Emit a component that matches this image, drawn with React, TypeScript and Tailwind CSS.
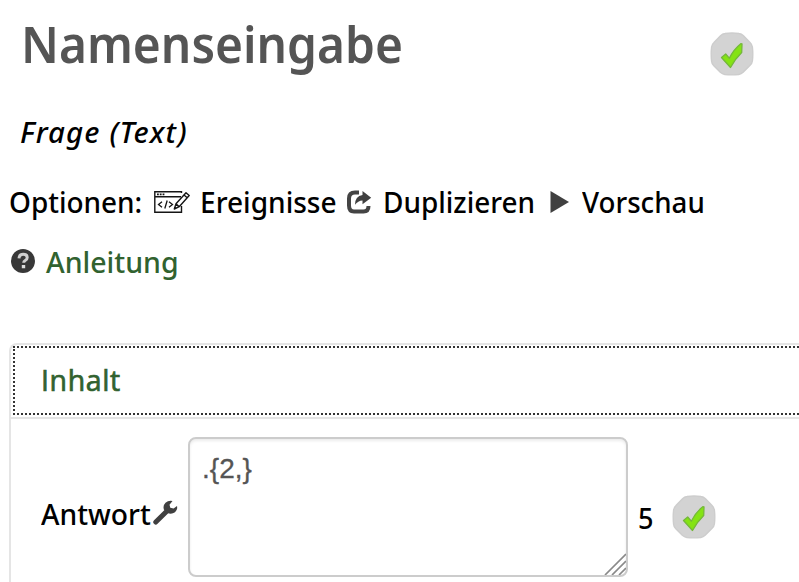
import React from "react";

function Check() {
  return (
    <svg viewBox="0 0 44 44" className="size-11 shrink-0">
      <path d="M15 1.500Q22 .500 29 1.500q2.500.300 4.500 2.300l6.500 6.700q2 2 2.400 4.500.800 7 0 14-.300 2.500-2.300 4.300l-7 7q-1.800 1.800-4.300 2.200-7 .800-14 0-2.500-.400-4.500-2.200l-6.500-6.500Q1.900 32 1.600 29.300.800 22 1.600 15q.300-2.500 2.400-4.500l6.500-6.700Q12.500 1.800 15 1.500z" fill="#d3d3d3" stroke="#cdcdcd" strokeWidth="1.400" />
      <path d="M11.500 25.500l4.200-3.500 3.600 4.200q4.500-9 11.500-14.500l1.200.300-.300 8.500Q25 27 20.500 35.500z" fill="#84e314" stroke="#74b83a" strokeWidth="1.300" strokeLinejoin="round" />
    </svg>
  );
}

function EditorIcon() {
  return (
    <svg viewBox="0 0 36 24" className="h-6 w-9 shrink-0" fill="none" stroke="#151515" strokeWidth="1.400">
      <path d="M27.500 3V1.700H.800v20.600h26.700V16M.800 6.800H27" />
      <path d="M3 4.300h7.500" strokeWidth="1.700" strokeDasharray="1.800 1" />
      <path d="M8 11.700L4.500 14.500 8 17.300M13.200 10.500l-2.400 8M15 11.700l3.500 2.800-3.500 2.800" strokeWidth="1.300" />
      <path d="M20.300 19l1.700-5.300L32 2.800l3.200 2.700-10 11.200zM30 5l3.200 2.700M22 13.700l3.200 3" fill="#fff" strokeLinejoin="round" />
    </svg>
  );
}

function ShareIcon() {
  return (
    <svg viewBox="0 0 26 26" className="size-[26px] shrink-0">
      <path d="M13 3.500H9Q3 3.500 3 9.500v7Q3 22.500 8 22.500h9.500q5 0 5-5.500" fill="none" stroke="#444" strokeWidth="4" />
      <path d="M16.500 2l8.700 6.700-8.700 6.500v-3.700q-4.500.200-7.500 4.300Q9 7 16.500 6z" fill="#404040" />
    </svg>
  );
}

function HelpIcon() {
  return (
    <svg viewBox="0 0 26 26" className="size-[26px] shrink-0">
      <circle cx="13" cy="13" r="12" fill="#383838" />
      <path d="M9 10.300q.300-4 4.200-4 4 0 4 3.200 0 1.900-2 3-1.500.800-1.500 2.300" fill="none" stroke="#d0d0d0" strokeWidth="3" />
      <path d="M11.800 17h3.400v3.200h-3.400z" fill="#ddd" />
    </svg>
  );
}

function Wrench() {
  return (
    <svg viewBox="0 0 26 26" className="size-[26px] shrink-0">
      <path d="M3.800 22L15 11" stroke="#404040" strokeWidth="5" strokeLinecap="round" />
      <path d="M20.500 1l-3 3.800.800 3 3.300.700 3.400-2.500q.800 4-2 6.300-3.300 2.300-7.500.800l-3.500-3.300q-1.500-4 1.500-7 3-2.700 7-1.800z" fill="#404040" />
    </svg>
  );
}

export default function App() {
  return (
    <main className="flex h-[582px] w-[799px] flex-col overflow-hidden bg-white font-['Noto_Sans',sans-serif] text-[28.5px] whitespace-nowrap text-black">
      <header className="flex h-[102px] shrink-0 items-start pl-[21px]">
        <h1 className="w-[689px] text-[50px] leading-[88px] font-semibold text-[#555]">
          <span className="inline-block origin-left scale-x-[.957]">Namenseingabe</span>
        </h1>
        <div className="pt-8"><Check /></div>
      </header>
      <p className="h-[70px] shrink-0 pl-[20px] leading-[60px] font-medium italic">
        <span className="inline-block origin-left scale-x-[1.03] tracking-[1.1px]">Frage (Text)</span>
      </p>
      <nav className="flex h-[60px] shrink-0 items-center pl-[9px] leading-[60px] font-medium">
        <span className="w-[145px]"><span className="inline-block origin-left scale-x-[.98]">Optionen:</span></span>
        <span className="w-[46px]"><EditorIcon /></span>
        <span className="w-[146px]"><span className="inline-block origin-left scale-x-[.985]">Ereignisse</span></span>
        <span className="w-[37px]"><ShareIcon /></span>
        <span className="w-[167px]"><span className="inline-block origin-left scale-x-[.98]">Duplizieren</span></span>
        <span className="w-[32px]">
          <svg viewBox="0 0 20 24" className="h-6 w-5"><path d="M.500 1L19 12 .500 23z" fill="#404040" /></svg>
        </span>
        <span><span className="inline-block origin-left scale-x-[.972]">Vorschau</span></span>
      </nav>
      <a className="flex h-[111px] shrink-0 items-start pl-[10px] leading-[60px] font-medium text-[#31622f]">
        <span className="w-[36px] pt-4"><HelpIcon /></span>
        <span className="inline-block origin-left">Anleitung</span>
      </a>
      <section className="ml-[9px] flex w-[820px] grow flex-col rounded-tl-lg border-2 border-b-0 border-[#e5e5e5]">
        <div className="h-[74px] shrink-0 border-b-2 border-[#e5e5e5] pt-px pl-[2px]">
          <h2 className="h-[69px] border-2 border-dotted border-[#333] pl-[26px] font-['Open_Sans',sans-serif] leading-[64px] font-medium text-[#31622f] [-webkit-text-stroke:0.7px_#31622f]">
            <span className="inline-block origin-left tracking-[.6px]">Inhalt</span>
          </h2>
        </div>
        <div className="flex items-start pt-[18px] pl-[30px] font-medium">
          <span className="w-[111px] leading-[154px]"><span className="inline-block origin-left scale-x-[.99]">Antwort</span></span>
          <span className="w-9 pt-[63px]"><Wrench /></span>
          <div className="relative h-[140px] w-[440px] rounded-lg border-2 border-[#ccc] pt-[14px] pl-3 font-['Liberation_Sans',Arial,sans-serif] text-[28px] leading-8 font-normal text-[#555] shadow-[inset_0_2px_3px_rgba(0,0,0,0.08)] [-webkit-text-stroke:0.3px_#555]">
            .{"{2,}"}
            <svg viewBox="0 0 22 22" className="absolute right-0 bottom-0 size-[22px]" stroke="#8a8a8a" strokeWidth="1.700">
              <path d="M1 22L22 1M8 22L22 8M15 22l7-7" />
            </svg>
          </div>
          <span className="w-[44px] pl-[10px] leading-[162px]"><span className="inline-block origin-left scale-x-[.95]">5</span></span>
          <div className="pt-[58px]"><Check /></div>
        </div>
      </section>
    </main>
  );
}
